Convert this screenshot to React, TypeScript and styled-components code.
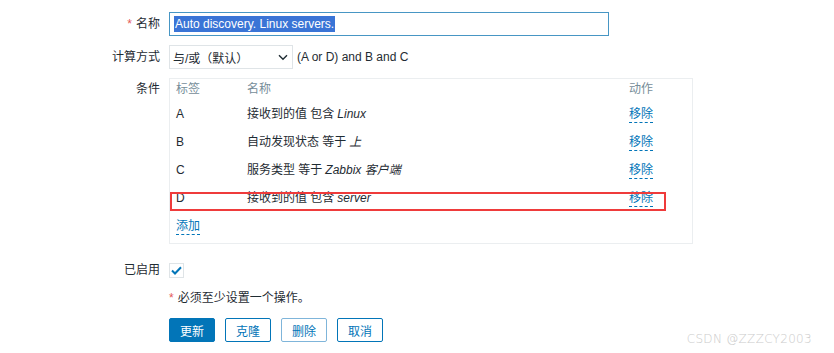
import React from "react";
import styled, { createGlobalStyle } from "styled-components";

const GlobalStyle = createGlobalStyle`
  html, body { margin: 0; padding: 0; background: #ffffff; }
  body {
    font-family: "Liberation Sans", Arial, "Noto Sans CJK SC", sans-serif;
    font-size: 12px;
    color: #1f2c33;
  }
  * { box-sizing: border-box; }
`;

const Page = styled.div`
  position: relative;
  width: 834px;
  height: 353px;
  padding-top: 12px;
  overflow: hidden;
`;

const FormRow = styled.div<{ $mt?: number; $h?: number; $align?: string }>`
  display: flex;
  align-items: ${(p) => p.$align || "center"};
  margin-top: ${(p) => p.$mt || 0}px;
  min-height: ${(p) => p.$h || 0}px;
`;

const Label = styled.div<{ $pt?: number }>`
  width: 160px;
  margin-right: 9px;
  text-align: right;
  line-height: 14px;
  padding-top: ${(p) => p.$pt || 0}px;
  flex-shrink: 0;
`;

const Asterisk = styled.span`
  color: #e45959;
  margin-right: 4px;
`;

const Spacer = styled.div`
  width: 169px;
  flex-shrink: 0;
`;

const NameField = styled.div`
  width: 440px;
  height: 24px;
  border: 1px solid #4796c4;
  display: flex;
  align-items: center;
  padding-left: 4px;
  background: #fff;
`;

const Selected = styled.span`
  background: #3a74d6;
  color: #ffffff;
  line-height: 16px;
  padding: 0 1px;
`;

const SelectBox = styled.div`
  width: 124px;
  height: 24px;
  border: 1px solid #dfe4e7;
  display: flex;
  align-items: center;
  justify-content: space-between;
  padding: 0 4px 0 3px;
  background: #fff;
`;

const Expression = styled.span`
  margin-left: 4px;
`;

const ConditionsBox = styled.div`
  width: 524px;
  border: 1px solid #ebeef0;
  padding: 0 6px 3px 6px;
  background: #fff;
`;

const TableRow = styled.div<{ $h: number }>`
  position: relative;
  display: grid;
  grid-template-columns: 71px 382px 1fr;
  align-items: center;
  height: ${(p) => p.$h}px;
  line-height: 15px;
`;

const HeadCell = styled.div`
  color: #768d99;
`;

const Cell = styled.div`
  display: flex;
  align-items: center;
  height: 15px;
`;

const Em = styled.em`
  margin-left: 3px;
`;

const Link = styled.span`
  color: #0275b8;
  border-bottom: 1px dashed #0275b8;
  line-height: 15px;
  display: inline-block;
  margin-top: 1px;
  cursor: pointer;
`;

const Highlight = styled.div`
  position: absolute;
  left: -6px;
  top: 8px;
  width: 496px;
  height: 19px;
  border: 2px solid #ef3b3b;
  pointer-events: none;
`;

const Checkbox = styled.div`
  width: 15px;
  height: 15px;
  border: 1px solid #dfe4e7;
  background: #fff;
  display: flex;
  align-items: center;
  justify-content: center;
`;

const Note = styled.div`
  line-height: 18px;
`;

const ButtonBar = styled.div`
  display: flex;
  gap: 10px;
`;

const Button = styled.button<{ $primary?: boolean; $muted?: boolean }>`
  width: 46px;
  height: 24px;
  padding: 0;
  font-family: inherit;
  font-size: 12px;
  border-radius: 2px;
  border: 1px solid ${(p) => (p.$muted ? "#7fb5da" : "#0275b8")};
  background: ${(p) => (p.$primary ? "#0275b8" : "#ffffff")};
  color: ${(p) => (p.$primary ? "#ffffff" : "#0275b8")};
  cursor: pointer;
`;

const Watermark = styled.div`
  position: absolute;
  right: 22px;
  bottom: 7px;
  font-family: "DejaVu Sans", sans-serif;
  font-weight: 300;
  font-size: 12px;
  color: #cbcbcb;
  letter-spacing: 0.3px;
`;

const Chevron = () => (
  <svg width="10" height="7" viewBox="0 0 10 7" fill="none">
    <path d="M1 1.2 L5 5.2 L9 1.2" stroke="#1f2c33" strokeWidth="1.4" />
  </svg>
);

const Check = () => (
  <svg width="11" height="9" viewBox="0 0 11 9" fill="none">
    <path d="M1 4.5 L4 7.5 L10 1.2" stroke="#0275b8" strokeWidth="2" />
  </svg>
);

const conditions = [
  { tag: "A", text: "接收到的值 包含", em: "Linux" },
  { tag: "B", text: "自动发现状态 等于", em: "上" },
  { tag: "C", text: "服务类型 等于", em: "Zabbix 客户端" },
  { tag: "D", text: "接收到的值 包含", em: "server", marked: true },
];

export default function App() {
  return (
    <>
      <GlobalStyle />
      <Page>
        <FormRow $h={24}>
          <Label>
            <Asterisk>*</Asterisk>名称
          </Label>
          <NameField>
            <Selected>Auto discovery. Linux servers.</Selected>
          </NameField>
        </FormRow>

        <FormRow $mt={9} $h={24}>
          <Label>计算方式</Label>
          <SelectBox>
            <span>与/或（默认）</span>
            <Chevron />
          </SelectBox>
          <Expression>(A or D) and B and C</Expression>
        </FormRow>

        <FormRow $mt={9} $align="flex-start">
          <Label $pt={4}>条件</Label>
          <ConditionsBox>
            <TableRow $h={21}>
              <HeadCell>标签</HeadCell>
              <HeadCell>名称</HeadCell>
              <HeadCell>动作</HeadCell>
            </TableRow>
            {conditions.map((c) => (
              <TableRow $h={28} key={c.tag}>
                <Cell>{c.tag}</Cell>
                <Cell>
                  {c.text}
                  <Em>{c.em}</Em>
                </Cell>
                <Cell>
                  <Link>移除</Link>
                </Cell>
                {c.marked && <Highlight />}
              </TableRow>
            ))}
            <TableRow $h={28}>
              <Cell>
                <Link>添加</Link>
              </Cell>
            </TableRow>
          </ConditionsBox>
        </FormRow>

        <FormRow $mt={14} $h={24}>
          <Label>已启用</Label>
          <Checkbox>
            <Check />
          </Checkbox>
        </FormRow>

        <FormRow $mt={7}>
          <Spacer />
          <Note>
            <Asterisk>*</Asterisk>必须至少设置一个操作。
          </Note>
        </FormRow>

        <FormRow $mt={11}>
          <Spacer />
          <ButtonBar>
            <Button $primary>更新</Button>
            <Button>克隆</Button>
            <Button $muted>删除</Button>
            <Button>取消</Button>
          </ButtonBar>
        </FormRow>

        <Watermark>CSDN @ZZZCY2003</Watermark>
      </Page>
    </>
  );
}
